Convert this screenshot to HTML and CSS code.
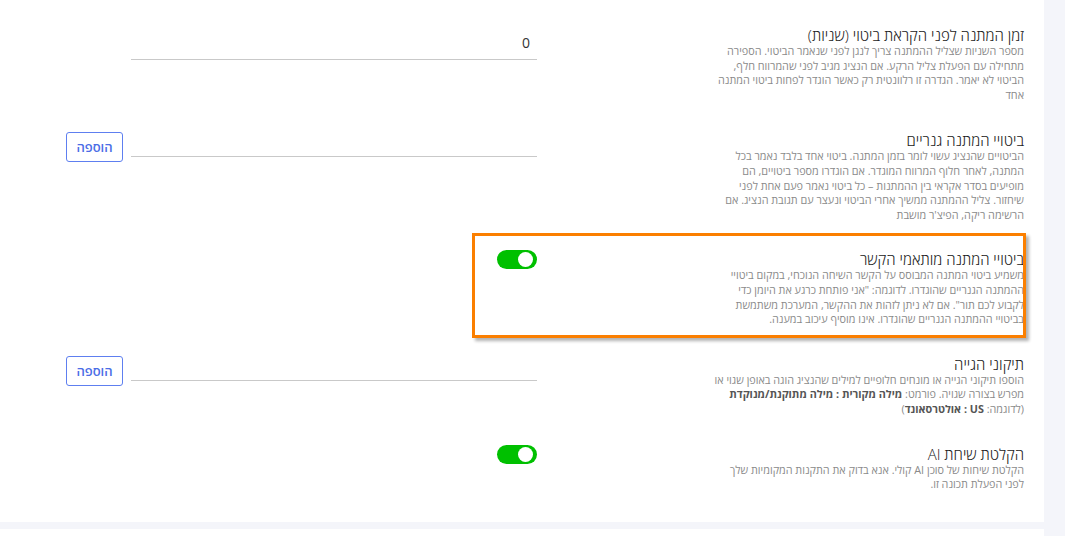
FILE: index.html
```html
<!DOCTYPE html>
<html lang="he" dir="rtl">
<head>
<meta charset="utf-8">
<title>הגדרות</title>
<link rel="stylesheet" href="styles.css">
</head>
<body>
<div class="page">
  <section class="card settings">
    <div class="row">
      <div class="info">
        <div class="title">זמן המתנה לפני הקראת ביטוי (שניות)</div>
        <p class="desc">מספר השניות שצליל ההמתנה צריך לנגן לפני שנאמר הביטוי. הספירה<br>מתחילה עם הפעלת צליל הרקע. אם הנציג מגיב לפני שהמרווח חלף,<br>הביטוי לא יאמר. הגדרה זו רלוונטית רק כאשר הוגדר לפחות ביטוי המתנה<br>אחד</p>
      </div>
      <div class="control">
        <div class="field field-tall"><span class="value">0</span></div>
      </div>
    </div>

    <div class="row">
      <div class="info">
        <div class="title">ביטויי המתנה גנריים</div>
        <p class="desc">הביטויים שהנציג עשוי לומר בזמן המתנה. ביטוי אחד בלבד נאמר בכל<br>המתנה, לאחר חלוף המרווח המוגדר. אם הוגדרו מספר ביטויים, הם<br>מופיעים בסדר אקראי בין ההמתנות – כל ביטוי נאמר פעם אחת לפני<br>שיחזור. צליל ההמתנה ממשיך אחרי הביטוי ונעצר עם תגובת הנציג. אם<br>הרשימה ריקה, הפיצ'ר מושבת</p>
      </div>
      <div class="control">
        <div class="field"></div>
        <button class="btn" type="button">הוספה</button>
      </div>
    </div>

    <div class="row highlight">
      <div class="info">
        <div class="title">ביטויי המתנה מותאמי הקשר</div>
        <p class="desc">משמיע ביטוי המתנה המבוסס על הקשר השיחה הנוכחי, במקום ביטויי<br>ההמתנה הגנריים שהוגדרו. לדוגמה: "אני פותחת כרגע את היומן כדי<br>לקבוע לכם תור". אם לא ניתן לזהות את ההקשר, המערכת משתמשת<br>בביטויי ההמתנה הגנריים שהוגדרו. אינו מוסיף עיכוב במענה.</p>
      </div>
      <div class="control">
        <span class="toggle"><span class="knob"></span></span>
      </div>
    </div>

    <div class="row">
      <div class="info">
        <div class="title">תיקוני הגייה</div>
        <p class="desc">הוספו תיקוני הגייה או מונחים חלופיים למילים שהנציג הוגה באופן שגוי או<br>מפרש בצורה שגויה. פורמט: <b>מילה מקורית : מילה מתוקנת/מנוקדת</b><br>(לדוגמה: <b>US : אולטרסאונד</b>)</p>
      </div>
      <div class="control">
        <div class="field"></div>
        <button class="btn" type="button">הוספה</button>
      </div>
    </div>

    <div class="row">
      <div class="info">
        <div class="title">הקלטת שיחת AI</div>
        <p class="desc">הקלטת שיחות של סוכן AI קולי. אנא בדוק את התקנות המקומיות שלך<br>לפני הפעלת תכונה זו.</p>
      </div>
      <div class="control">
        <span class="toggle"><span class="knob"></span></span>
      </div>
    </div>
  </section>
  <section class="card card-next"></section>
</div>
</body>
</html>
```

FILE: styles.css
```css
html, body {
  margin: 0;
  height: 100%;
}

body {
  background: #f4f5fa;
  font-family: "Open Sans", "Liberation Sans", Arial, sans-serif;
  overflow: hidden;
}

.page {
  width: 1044px;
  margin: 0 auto 0 0;
  display: flex;
  flex-direction: column;
  gap: 7px;
}

.card {
  background: #ffffff;
}

.settings {
  padding: 12px 0 16px;
}

.card-next {
  height: 7px;
}

.row {
  position: relative;
  display: flex;
  justify-content: space-between;
  align-items: flex-start;
  padding: 14px 20px 14px 0;
}

.row:first-child {
  padding-bottom: 15px;
}

.info {
  width: 330px;
}

.title {
  font-size: 15px;
  font-weight: 300;
  line-height: 18px;
  color: #222222;
}

.desc {
  margin: 0;
  font-size: 10.8px;
  line-height: 14.6px;
  color: #8a8a8a;
  white-space: nowrap;
}

.desc b {
  color: #555555;
  font-weight: 700;
}

.control {
  width: 537px;
  box-sizing: border-box;
  padding-left: 66px;
  display: flex;
  align-items: flex-start;
  gap: 8px;
}

.field {
  width: 406px;
  height: 26px;
  box-sizing: border-box;
  border-bottom: 1px solid #c9c9c9;
  display: flex;
  align-items: center;
  padding-right: 7px;
  font-size: 14px;
  color: #333333;
}

.field-tall {
  height: 34px;
}

.btn {
  width: 57px;
  height: 30px;
  margin-top: 1px;
  padding: 0;
  box-sizing: border-box;
  border: 1px solid #5e7ff0;
  border-radius: 3px;
  background: #ffffff;
  color: #4b6de6;
  font-family: "Open Sans", "Liberation Sans", Arial, sans-serif;
  font-size: 13px;
  font-weight: 600;
}

.toggle {
  direction: ltr;
  width: 40px;
  height: 19px;
  box-sizing: border-box;
  padding: 0 4px;
  border-radius: 10px;
  background: #00c000;
  display: flex;
  align-items: center;
  justify-content: flex-end;
}

.knob {
  width: 15px;
  height: 15px;
  border-radius: 50%;
  background: #ffffff;
}

.highlight::after {
  content: "";
  position: absolute;
  left: 472px;
  right: 18px;
  top: -3px;
  bottom: 3px;
  border: 3px solid #fb7f00;
  box-shadow: 3px 3px 3px rgba(0, 0, 0, 0.3);
  pointer-events: none;
}
```
